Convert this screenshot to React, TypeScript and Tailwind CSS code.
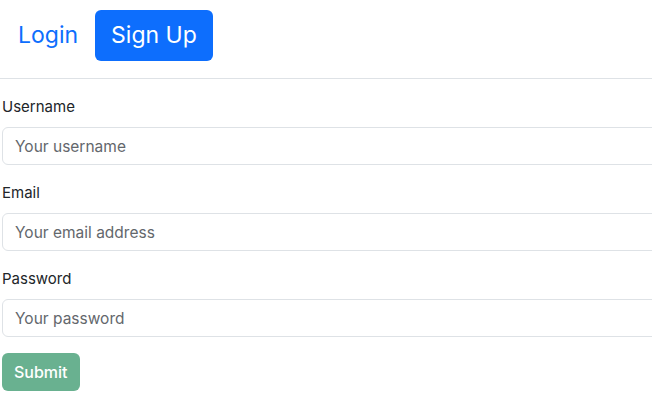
const fields = [
  { label: "Username", type: "text", placeholder: "Your username" },
  { label: "Email", type: "email", placeholder: "Your email address" },
  { label: "Password", type: "password", placeholder: "Your password" },
];

export default function App() {
  return (
    <div className="h-[401px] w-[652px] overflow-hidden bg-white font-['Inter',sans-serif] text-[#212529]">
      <div className="w-[720px]">
        <nav className="flex items-center border-b border-[#dee2e6] pt-[10px] pb-[17px] pl-[2px]">
          <a href="#" className="px-4 py-2 text-[23px] leading-[35px] text-[#0d6efd]">
            Login
          </a>
          <a
            href="#"
            className="ml-px rounded-md bg-[#0d6efd] px-4 py-2 text-[23px] leading-[35px] text-white"
          >
            Sign Up
          </a>
        </nav>
        <form className="pt-4 pl-[2px]">
          {fields.map((f) => (
            <div key={f.label} className="mb-4">
              <label className="mb-2 block text-[15px] leading-6">{f.label}</label>
              <input
                type={f.type}
                placeholder={f.placeholder}
                className="block h-[38px] w-full rounded-md border border-[#dee2e6] px-3 text-[15.5px] placeholder:text-[#63676c] focus:outline-none"
              />
            </div>
          ))}
          <button
            type="button"
            className="h-[38px] rounded-md bg-[#69b190] px-3 text-[16px] font-medium text-white"
          >
            Submit
          </button>
        </form>
      </div>
    </div>
  );
}
